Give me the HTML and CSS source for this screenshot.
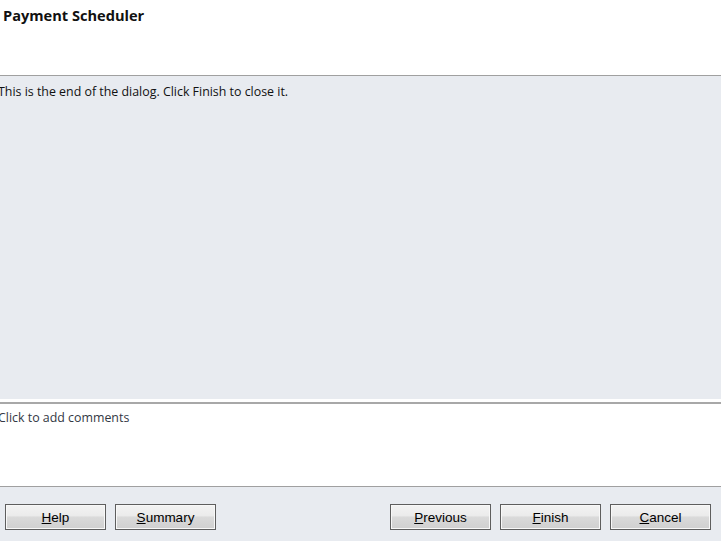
FILE: index.html
```html
<!DOCTYPE html>
<html lang="en">
<head>
    <meta charset="UTF-8">
    <title>Payment Scheduler</title>
    <link rel="stylesheet" href="styles.css">
</head>
<body>

    <!-- Dialog header -->
    <div class="header">
        <h1>Payment Scheduler</h1>
    </div>

    <!-- Dialog body -->
    <div class="content">
        <p>This is the end of the dialog. Click Finish to close it.</p>
    </div>

    <!-- Comments -->
    <div class="comments">
        <p>Click to add comments</p>
    </div>

    <!-- Footer buttons -->
    <div class="footer">
        <div class="btn-group">
            <button class="btn"><u>H</u>elp</button>
            <button class="btn"><u>S</u>ummary</button>
        </div>
        <div class="btn-group">
            <button class="btn"><u>P</u>revious</button>
            <button class="btn"><u>F</u>inish</button>
            <button class="btn"><u>C</u>ancel</button>
        </div>
    </div>

</body>
</html>
```

FILE: styles.css
```css
* {
    margin: 0;
    padding: 0;
    box-sizing: border-box;
}

body {
    width: 721px;
    height: 541px;
    overflow: hidden;
    background: #ffffff;
    font-family: "Open Sans", "Noto Sans", sans-serif;
    color: #000;
    display: flex;
    flex-direction: column;
}

/* Header */
.header {
    height: 76px;
    border-bottom: 1px solid #a0a0a0;
    padding: 5px 0 0 3px;
}

.header h1 {
    font-size: 14.6px;
    font-weight: bold;
    color: #111;
}

/* Body */
.content {
    height: 323px;
    background: #e8ebf0;
    padding: 7px 0 0 0;
}

.content p {
    font-size: 12.4px;
    margin-left: -2px;
    color: #111;
}

/* Comments */
.comments {
    height: 85px;
    margin-top: 3px;
    border-top: 2px solid #a8a8a8;
    border-bottom: 1px solid #a0a0a0;
    padding: 5px 0 0 0;
}

.comments p {
    font-size: 12.4px;
    margin-left: -2px;
    color: #333844;
}

/* Footer */
.footer {
    flex: 1;
    background: #e8ebf0;
    display: flex;
    justify-content: space-between;
    padding: 17px 10px 0 5px;
}

.btn-group {
    display: flex;
    gap: 9px;
}

.btn {
    width: 101px;
    height: 26px;
    font-family: "Liberation Sans", Arial, sans-serif;
    font-size: 13.5px;
    color: #000;
    border: 1px solid #5e5e5e;
    background: linear-gradient(#f3f3f3, #ebebeb 45%, #dadada 50%, #d0d0d0);
    box-shadow: inset 0 0 0 1px #f8f8f8;
    cursor: pointer;
}
```
